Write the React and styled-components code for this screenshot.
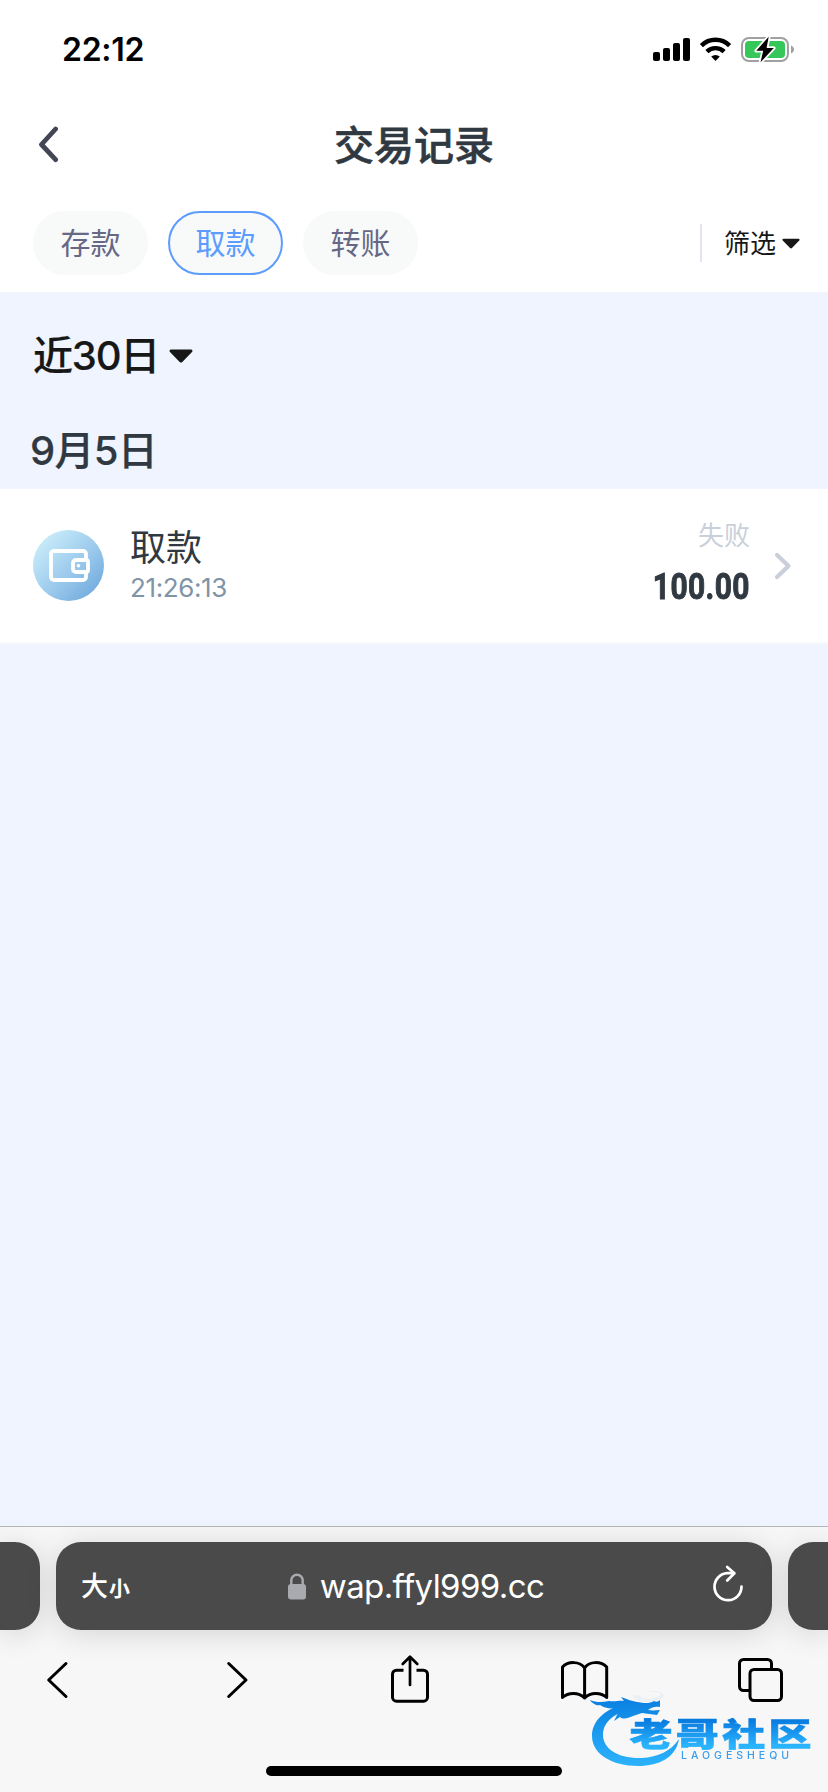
import React, { useState } from 'react';
import styled, { createGlobalStyle } from 'styled-components';

const tabs = ['存款', '取款', '转账'];

const records = [
  { id: 1, type: '取款', time: '21:26:13', status: '失败', amount: '100.00' },
];

const SignalIcon = () => (
  <svg width="37" height="26" viewBox="0 0 37 26">
    <rect x="0" y="16" width="7" height="9" rx="2" />
    <rect x="10" y="12" width="7" height="13" rx="2" />
    <rect x="20" y="7" width="7" height="18" rx="2" />
    <rect x="30" y="2" width="7" height="23" rx="2" />
  </svg>
);

const WifiIcon = () => (
  <svg width="33" height="26" viewBox="0 0 33 26" fill="none" stroke="#000" strokeWidth="4.4">
    <path d="M2.4 9.6a20 20 0 0 1 28.2 0" />
    <path d="M7.9 15.6a12.3 12.3 0 0 1 17.2 0" />
    <path d="M12.2 20.6a6.4 6.4 0 0 1 8.6 0L16.5 25z" fill="#000" stroke="none" />
  </svg>
);

const BatteryIcon = () => (
  <svg width="54" height="27" viewBox="0 0 54 27">
    <rect x="1" y="2" width="46" height="23" rx="7" fill="none" stroke="#a0a0a0" strokeWidth="2" />
    <path d="M50 9.5c4 1.5 4 6.5 0 8z" fill="#a0a0a0" />
    <rect x="4" y="5" width="40" height="17" rx="4" fill="#35c759" />
    <path
      d="M27.7 .8L15.3 14.8h6.9L19.5 26.3L32.8 12h-7.2z"
      stroke="#fff"
      strokeWidth="3.6"
      strokeLinejoin="round"
      paintOrder="stroke"
    />
  </svg>
);

const WalletIcon = () => (
  <svg width="71" height="71" viewBox="0 0 71 71" fill="none" stroke="#fff" strokeWidth="3.8">
    <path d="M53 28v-4a3 3 0 0 0-3-3H21a3 3 0 0 0-3 3v23a3 3 0 0 0 3 3h29a3 3 0 0 0 3-3v-4" />
    <path d="M53 30H43a3 3 0 0 0-3 3v6a3 3 0 0 0 3 3h10a2 2 0 0 0 2-2v-8a2 2 0 0 0-2-2z" />
    <circle cx="45.5" cy="35.8" r="1.8" fill="#fff" stroke="none" />
  </svg>
);

const LockIcon = () => (
  <svg width="18" height="27" viewBox="0 0 18 27">
    <path d="M3.3 12V7.5a5.7 5.7 0 0 1 11.4 0V12" fill="none" stroke="#a9a9b0" strokeWidth="2.4" />
    <rect x="0" y="11" width="18" height="15.5" rx="3" fill="#a9a9b0" />
  </svg>
);

const ReloadIcon = () => (
  <svg width="32" height="38" viewBox="0 0 32 38" fill="none" stroke="#fff" strokeWidth="2.7" strokeLinecap="round" strokeLinejoin="round">
    <path d="M22 9.2h-6.5A13.5 13.5 0 1 0 29.5 22.5" />
    <path d="M15.2 3l7.2 6.3-7.2 7.2" />
  </svg>
);

const Caret = ({ width, height }) => (
  <svg width={width} height={height} viewBox="0 0 24 14">
    <path d="M2 .5h20c1.5 0 2 1.5 1 2.5L13.3 13c-.8.8-1.8.8-2.6 0L1 3C0 2 .5.5 2 .5z" fill="#171717" />
  </svg>
);

const NavIcon = ({ children }) => (
  <svg width="48" height="52" viewBox="0 0 48 52" fill="none" stroke="#000" strokeWidth="3" strokeLinecap="round" strokeLinejoin="round">
    {children}
  </svg>
);

const Watermark = () => (
  <Mark>
    <svg width="236" height="84" viewBox="0 0 236 84">
      <defs>
        <linearGradient id="ring" x1="0" y1="10" x2="0" y2="74" gradientUnits="userSpaceOnUse">
          <stop offset="0" stopColor="#0b82e2" />
          <stop offset="1" stopColor="#2bb2fc" />
        </linearGradient>
        <linearGradient id="word" x1="0" y1="26" x2="0" y2="58" gradientUnits="userSpaceOnUse" gradientTransform="scale(1 1.333)">
          <stop offset="0.1" stopColor="#087bdf" />
          <stop offset="0.9" stopColor="#2bb4fe" />
        </linearGradient>
      </defs>
      <g fill="url(#ring)">
        <path d="M34 13C13 19 2 31 2 45c0 18 20 30 46 30 22 0 38-9 41-27-8 12-21 18-37 19-23 1-39-9-39-23 0-12 9-21 30-27z" />
        <path d="M0 9c7 3 13 2 19 1 6 1 11-1 15 0l-3-4c6 2 10 4 16 5 7 1 12 2 17-1 2 1 4 1 6-1 0 3 0 4 0 7-6-1-9 1-12 3 5 1 8 0 12 0l-3 5-15-2-9 3c-5 2-10 4-13 1l-6 4 4-8-7 1 7-6c-8 1-14 0-18-3C8 15 2 13 0 9z" />
        <path d="M42 5c6-3 10 2 16 3 6 0 9-2 13-4-2-4-9-3-13-4 9-1 16 1 16 5-2 5-13 7-21 6-5-1-8-3-11-6z" opacity="0.05" />
      </g>
      <text
        x="39.5"
        y="74"
        transform="scale(1 0.75)"
        textLength="182"
        lengthAdjust="spacing"
        fill="url(#word)"
        stroke="url(#word)"
        strokeWidth="0.9"
        fontSize="43"
        fontWeight="900"
        fontFamily="'Noto Sans CJK SC', sans-serif"
      >
        老哥社区
      </text>
      <text x="91" y="67.5" textLength="108" lengthAdjust="spacing" fill="#389ded" fontSize="10.5" fontWeight="500" fontFamily="Inter, sans-serif">
        LAOGESHEQU
      </text>
    </svg>
  </Mark>
);

const App = () => {
  const [active, setActive] = useState('取款');

  return (
    <Page>
      <GlobalStyle />
      <StatusBar>
        <Clock>22:12</Clock>
        <StatusIcons>
          <SignalIcon />
          <WifiIcon />
          <BatteryIcon />
        </StatusIcons>
      </StatusBar>
      <Header>
        <BackButton aria-label="返回">
          <svg width="22" height="38" viewBox="0 0 22 38" fill="none" stroke="#434655" strokeWidth="4.8" strokeLinecap="round" strokeLinejoin="round">
            <path d="M17.6 4L3.5 19.5l14.1 15.2" />
          </svg>
        </BackButton>
        <Title>交易记录</Title>
      </Header>
      <Toolbar>
        <Tabs>
          {tabs.map((tab) => (
            <Tab key={tab} $active={tab === active} onClick={() => setActive(tab)}>
              {tab}
            </Tab>
          ))}
        </Tabs>
        <Filter>
          <span>筛选</span>
          <Caret width="18" height="11" />
        </Filter>
      </Toolbar>
      <Content>
        <Period>
          近30日
          <Caret width="24" height="14" />
        </Period>
        <DayTitle>9月5日</DayTitle>
        {records.map((record) => (
          <Record key={record.id}>
            <RecordIcon>
              <WalletIcon />
            </RecordIcon>
            <RecordInfo>
              <RecordType>{record.type}</RecordType>
              <RecordTime>{record.time}</RecordTime>
            </RecordInfo>
            <RecordResult>
              <RecordStatus>{record.status}</RecordStatus>
              <Amount>{record.amount}</Amount>
            </RecordResult>
            <svg width="18" height="28" viewBox="0 0 18 28" fill="none" stroke="#c9d0d9" strokeWidth="4.2" strokeLinecap="round" strokeLinejoin="round">
              <path d="M3 3l11.5 11L3 25" />
            </svg>
          </Record>
        ))}
      </Content>
      <Browser>
        <AddressRow>
          <SideTab $side="left" />
          <AddressBar>
            <TextSize>
              大<small>小</small>
            </TextSize>
            <Address>
              <LockIcon />
              <Url>wap.ffyl999.cc</Url>
            </Address>
            <Reload aria-label="刷新">
              <ReloadIcon />
            </Reload>
          </AddressBar>
          <SideTab $side="right" />
        </AddressRow>
        <Nav>
          <NavIcon>
            <path d="M30 11.5L12.7 28 30 44.5" />
          </NavIcon>
          <NavIcon>
            <path d="M17.7 11.5L35 28 17.7 44.5" />
          </NavIcon>
          <NavIcon>
            <path d="M17.5 18.2h-7a4 4 0 0 0-4 4v23a4 4 0 0 0 4 4h27a4 4 0 0 0 4-4v-23a4 4 0 0 0-4-4h-7" strokeLinecap="butt" />
            <path d="M24 33V5M16.7 12L24 4.7l7.3 7.3" strokeWidth="2.7" />
          </NavIcon>
          <NavIcon>
            <path d="M23.6 46V16C19 9 7 9 1.500 15v30.500c6-5.500 16-5.500 22.100.5 6-6 16-6 22.100-.5V15C40 9 28 9 23.600 16" />
          </NavIcon>
          <NavIcon>
            <path d="M14 38.5H7.5a4 4 0 0 1-4-4v-23a4 4 0 0 1 4-4h24a4 4 0 0 1 4 4v6" strokeLinecap="butt" />
            <rect x="14" y="17.5" width="31.5" height="31" rx="4" />
          </NavIcon>
        </Nav>
        <HomeIndicator />
        <Watermark />
      </Browser>
    </Page>
  );
};

const GlobalStyle = createGlobalStyle`
  * {
    box-sizing: border-box;
  }

  body {
    margin: 0;
    font-family: Inter, 'Noto Sans CJK SC', sans-serif;
  }

  svg {
    display: block;
    flex-shrink: 0;
  }

  button {
    padding: 0;
    border: none;
    background: none;
    font-family: inherit;
  }
`;

const Page = styled.div`
  display: flex;
  flex-direction: column;
  width: 828px;
  height: 1792px;
  overflow: hidden;
  background-color: #fff;
`;

const StatusBar = styled.div`
  display: flex;
  justify-content: space-between;
  align-items: center;
  height: 98px;
  padding: 0 33px 0 62px;
`;

const Clock = styled.span`
  font-size: 32px;
  font-weight: 600;
  line-height: 40px;
  letter-spacing: -0.3px;
  padding-top: 2px;
`;

const StatusIcons = styled.div`
  display: flex;
  align-items: center;
  gap: 9px;
`;

const Header = styled.header`
  display: grid;
  grid-template-columns: 80px 1fr 80px;
  align-items: center;
  height: 96px;
`;

const BackButton = styled.button`
  padding: 0 0 5px 38px;
`;

const Title = styled.h1`
  margin: 0;
  color: #303941;
  font-size: 40px;
  font-weight: 500;
  line-height: 60px;
  text-align: center;
  -webkit-text-stroke: 0.6px #303941;
`;

const Toolbar = styled.div`
  display: flex;
  justify-content: space-between;
  align-items: flex-start;
  height: 98px;
  padding: 17px 28px 0 33px;
`;

const Tabs = styled.div`
  display: flex;
  gap: 20px;
`;

const Tab = styled.button`
  width: 115px;
  height: 64px;
  padding-bottom: 5px;
  border: 2px solid ${(props) => (props.$active ? '#5c9cff' : '#f8f9f9')};
  border-radius: 32px;
  background-color: #f8f9f9;
  color: ${(props) => (props.$active ? '#5c9cff' : '#676885')};
  font-size: 30px;
`;

const Filter = styled.div`
  display: flex;
  align-items: center;
  gap: 6px;
  height: 38px;
  margin-top: 13px;
  padding-left: 22px;
  border-left: 2px solid #e4e4ee;
  color: #171717;
  font-size: 26px;

  span {
    padding-bottom: 4px;
  }
`;

const Content = styled.main`
  flex: 1;
  background-color: #eff4ff;
`;

const Period = styled.div`
  display: flex;
  align-items: center;
  gap: 10px;
  padding: 34px 0 0 33px;
  color: #171717;
  font-size: 40px;
  font-weight: 500;
  line-height: 60px;
  letter-spacing: -1.2px;
  -webkit-text-stroke: 0.2px #171717;
`;

const DayTitle = styled.h2`
  margin: 0;
  padding: 35px 0 8px 30px;
  color: #303941;
  font-size: 40px;
  font-weight: 500;
  line-height: 60px;
  letter-spacing: -0.7px;
  -webkit-text-stroke: 0.2px #303941;
`;

const Record = styled.div`
  display: flex;
  align-items: center;
  height: 155px;
  padding-right: 36px;
  padding-left: 33px;
  border-bottom: 2px solid #f7f8fa;
  background-color: #fff;
`;

const RecordIcon = styled.div`
  width: 71px;
  height: 71px;
  border-radius: 50%;
  background-image: linear-gradient(135deg, #cdeffb 8%, #9ccaec 55%, #6ba6dc 95%);
`;

const RecordInfo = styled.div`
  flex: 1;
  padding-left: 26px;
`;

const RecordType = styled.div`
  color: #303941;
  font-size: 36px;
  line-height: 44px;
`;

const RecordTime = styled.div`
  color: #8094a8;
  font-size: 26px;
  line-height: 35px;
  letter-spacing: -0.4px;
`;

const RecordResult = styled.div`
  display: flex;
  flex-direction: column;
  align-items: flex-end;
  margin-right: 24px;
  padding-bottom: 2px;
`;

const RecordStatus = styled.div`
  color: #c9d0d9;
  font-size: 26px;
  line-height: 44px;
`;

const Amount = styled.div`
  color: #303941;
  font-family: Roboto, sans-serif;
  font-size: 37px;
  font-weight: 700;
  line-height: 58px;
  letter-spacing: 0.5px;
  transform: scaleX(0.81);
  transform-origin: right;
  -webkit-text-stroke: 1px #303941;
`;

const Browser = styled.footer`
  position: relative;
  height: 266px;
  padding-top: 15px;
  border-top: 1px solid #b7b7ba;
  background-color: #f7f7f7;
`;

const AddressRow = styled.div`
  display: flex;
  gap: 16px;
  height: 88px;
`;

const Bar = styled.div`
  background-color: #4a4a4a;
  box-shadow: 0 4px 30px rgba(0, 0, 0, 0.14);
`;

const SideTab = styled(Bar)`
  width: 40px;
  border-radius: ${(props) => (props.$side === 'left' ? '0 25px 25px 0' : '25px 0 0 25px')};
`;

const AddressBar = styled(Bar)`
  display: grid;
  grid-template-columns: 1fr auto 1fr;
  align-items: center;
  flex: 1;
  padding: 0 28px 0 25px;
  border-radius: 25px;
  color: #fff;
`;

const TextSize = styled.div`
  padding-bottom: 3px;
  font-size: 27px;
  font-weight: 500;

  small {
    margin-left: 1px;
    font-size: 21px;
    font-weight: 700;
  }
`;

const Address = styled.div`
  display: flex;
  align-items: center;
  gap: 14px;
  padding-left: 7px;
`;

const Url = styled.span`
  font-size: 33px;
  line-height: 44px;
  letter-spacing: -0.6px;
`;

const Reload = styled.button`
  justify-self: end;
  padding-bottom: 6px;
`;

const Nav = styled.nav`
  display: flex;
  justify-content: space-between;
  padding: 22px 44px 0 36px;
`;

const HomeIndicator = styled.div`
  width: 296px;
  height: 10px;
  margin: 62px auto 0;
  border-radius: 5px;
  background-color: #000;
`;

const Mark = styled.div`
  position: absolute;
  right: 2px;
  bottom: 17px;
  filter: blur(0.5px);
`;

export default App;
